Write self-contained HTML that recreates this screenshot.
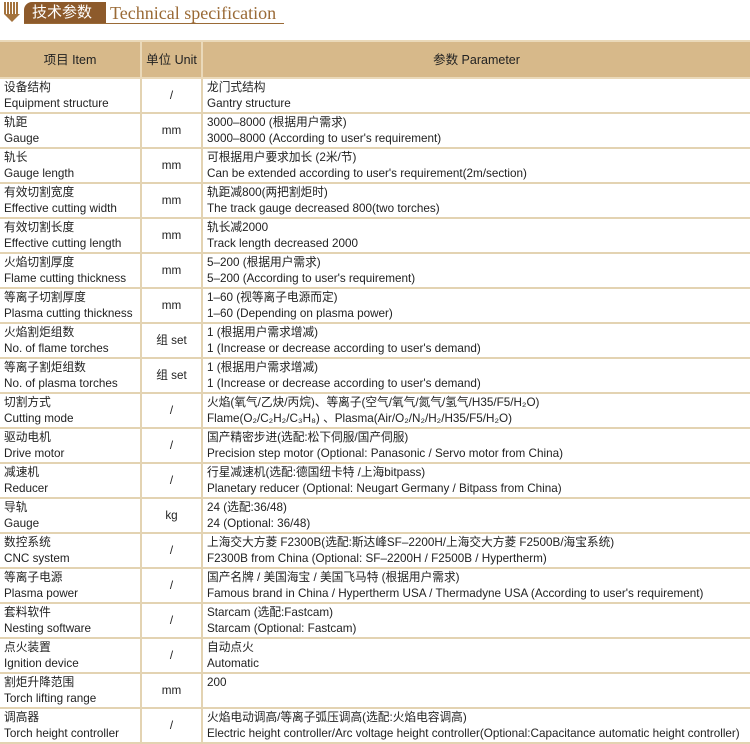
<!DOCTYPE html>
<html><head><meta charset="utf-8"><style>
body{margin:0;width:750px;height:740px;background:#fff;overflow:hidden;font-family:"Liberation Sans","Noto Sans CJK SC",sans-serif;color:#222;}
.t{position:absolute;left:0;top:0;height:28px;width:300px}
table{position:absolute;left:0;top:40px;width:750px;border-collapse:collapse;table-layout:fixed}
td,th{border:2px solid #e3d3b2;font-size:11.7px;line-height:16px;padding:0 4px;vertical-align:top;font-weight:normal;white-space:nowrap;overflow:hidden}
th{background:#d7b98a;font-size:12.5px;vertical-align:middle;color:#222;border-color:#ead9b9}
tr.h{height:37px}
tr{height:34.8px}
td{padding-top:1px}
td.u{text-align:center;vertical-align:middle}
tr td:first-child,tr th:first-child{border-left:none}
tr td:last-child,tr th:last-child{border-right:none}
</style></head><body>
<div class="t">
<svg width="24" height="26" style="position:absolute;left:2px;top:0">
<path d="M3 2v12M6 2v14M9 2v14M12 2v14M15 2v12" stroke="#a4733d" stroke-width="2"/>
<path d="M2 14l8 8l8-8" fill="#a4733d"/></svg>
<div style="position:absolute;left:24px;top:2px;width:82px;height:22px;background:#8d5a2b;border-radius:8px 0 0 0;color:#fff;font-size:15px;line-height:22px;padding-left:8px;box-sizing:border-box">技术参数</div>
<div style="position:absolute;left:110px;top:0;font-family:'Liberation Serif',serif;font-size:18px;color:#9a6a36;line-height:26px">Technical specification</div>
<div style="position:absolute;left:24px;top:23px;width:260px;height:1px;background:#9a6a36"></div>
</div>
<table>
<colgroup><col style="width:141px"><col style="width:61px"><col></colgroup>
<tr class="h"><th>项目 Item</th><th>单位 Unit</th><th>参数 Parameter</th></tr>
<tr><td>设备结构<br>Equipment structure</td><td class="u">/</td><td>龙门式结构<br>Gantry structure</td></tr>
<tr><td>轨距<br>Gauge</td><td class="u">mm</td><td>3000–8000 (根据用户需求)<br>3000–8000 (According to user's requirement)</td></tr>
<tr><td>轨长<br>Gauge length</td><td class="u">mm</td><td>可根据用户要求加长 (2米/节)<br>Can be extended according to user's requirement(2m/section)</td></tr>
<tr><td>有效切割宽度<br>Effective cutting width</td><td class="u">mm</td><td>轨距减800(两把割炬时)<br>The track gauge decreased 800(two torches)</td></tr>
<tr><td>有效切割长度<br>Effective cutting length</td><td class="u">mm</td><td>轨长减2000<br>Track length decreased 2000</td></tr>
<tr><td>火焰切割厚度<br>Flame cutting thickness</td><td class="u">mm</td><td>5–200 (根据用户需求)<br>5–200 (According to user's requirement)</td></tr>
<tr><td>等离子切割厚度<br>Plasma cutting thickness</td><td class="u">mm</td><td>1–60 (视等离子电源而定)<br>1–60 (Depending on plasma power)</td></tr>
<tr><td>火焰割炬组数<br>No. of flame torches</td><td class="u">组 set</td><td>1 (根据用户需求增减)<br>1 (Increase or decrease according to user's demand)</td></tr>
<tr><td>等离子割炬组数<br>No. of plasma torches</td><td class="u">组 set</td><td>1 (根据用户需求增减)<br>1 (Increase or decrease according to user's demand)</td></tr>
<tr><td>切割方式<br>Cutting mode</td><td class="u">/</td><td>火焰(氧气/乙炔/丙烷)、等离子(空气/氧气/氮气/氢气/H35/F5/H₂O)<br>Flame(O₂/C₂H₂/C₃H₈) 、Plasma(Air/O₂/N₂/H₂/H35/F5/H₂O)</td></tr>
<tr><td>驱动电机<br>Drive motor</td><td class="u">/</td><td>国产精密步进(选配:松下伺服/国产伺服)<br>Precision step motor (Optional: Panasonic / Servo motor from China)</td></tr>
<tr><td>减速机<br>Reducer</td><td class="u">/</td><td>行星减速机(选配:德国纽卡特 /上海bitpass)<br>Planetary reducer (Optional: Neugart Germany / Bitpass from China)</td></tr>
<tr><td>导轨<br>Gauge</td><td class="u">kg</td><td>24 (选配:36/48)<br>24 (Optional: 36/48)</td></tr>
<tr><td>数控系统<br>CNC system</td><td class="u">/</td><td>上海交大方菱 F2300B(选配:斯达峰SF–2200H/上海交大方菱 F2500B/海宝系统)<br>F2300B from China (Optional: SF–2200H / F2500B / Hypertherm)</td></tr>
<tr><td>等离子电源<br>Plasma power</td><td class="u">/</td><td>国产名牌 / 美国海宝 / 美国飞马特 (根据用户需求)<br>Famous brand in China / Hypertherm USA / Thermadyne USA (According to user's requirement)</td></tr>
<tr><td>套料软件<br>Nesting software</td><td class="u">/</td><td>Starcam (选配:Fastcam)<br>Starcam (Optional: Fastcam)</td></tr>
<tr><td>点火装置<br>Ignition device</td><td class="u">/</td><td>自动点火<br>Automatic</td></tr>
<tr><td>割炬升降范围<br>Torch lifting range</td><td class="u">mm</td><td>200</td></tr>
<tr><td>调高器<br>Torch height controller</td><td class="u">/</td><td>火焰电动调高/等离子弧压调高(选配:火焰电容调高)<br>Electric height controller/Arc voltage height controller(Optional:Capacitance automatic height controller)</td></tr>
</table>
</body></html>
